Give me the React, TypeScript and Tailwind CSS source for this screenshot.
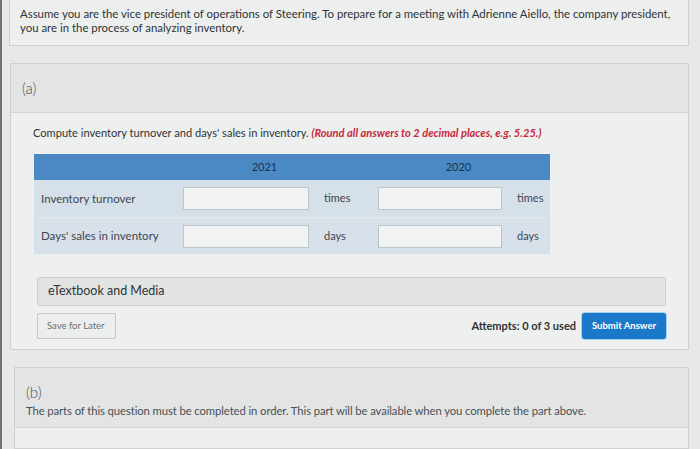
import React from 'react';

const font = { fontFamily: 'Lato, "Open Sans", sans-serif' };

const InputCell: React.FC<{ width: string; unit: string }> = ({ width, unit }) => (
  <div className="flex items-center">
    <div className={`${width} h-[23px] bg-[#f1f2f2] border border-[#bcc5cc]`} />
    <span className="ml-[15px] text-[11px] text-[#3d4650]">{unit}</span>
  </div>
);

export default function App() {
  return (
    <div
      className="w-[700px] h-[449px] bg-[#e7e9e8] flex overflow-hidden text-[#333]"
      style={font}
    >
      {/* dark monitor edge */}
      <div className="w-[2px] h-full bg-[#707372]" />

      <div className="flex-1 pl-[7px] pr-[11px] flex flex-col">
        {/* Intro */}
        <div className="h-[47px] -mt-[1px] border border-[#cfd1d0] bg-[#edefee] px-[10px] pt-[7px] text-[11.4px] leading-[14px] text-[#2f3336]">
          Assume you are the vice president of operations of Steering. To prepare for a meeting with Adrienne Aiello, the company president,
          <br />
          you are in the process of analyzing inventory.
        </div>

        {/* Part (a) */}
        <div className="mt-[17px] ml-[1px] border border-[#cfd1d0] bg-[#eef0ef]">
          <div className="h-[49px] bg-[#e3e5e4] border-b border-[#d2d4d3] pl-[11px] flex items-center text-[15px] font-light text-[#4a5058]">
            (a)
          </div>

          <div className="pl-[22px] pr-[21px] pt-[13px] pb-[10px]">
            <p className="text-[11.1px] leading-[14px] text-[#2f3336]">
              Compute inventory turnover and days' sales in inventory.{' '}
              <span className="font-bold italic text-[#c8283c]">
                (Round all answers to 2 decimal places, e.g. 5.25.)
              </span>
            </p>

            <div className="mt-[14px] w-[516px] ml-[1px]">
              <div className="h-[26px] bg-[#4a89c3] flex items-center text-[11px] text-[#1d3350]">
                <div className="w-[142px]" />
                <div className="w-[195px] text-center pr-[18px]">2021</div>
                <div className="w-[179px] text-center pr-[4px]">2020</div>
              </div>
              <div className="h-[37px] bg-[#d6e0e9] flex items-center">
                <div className="w-[142px] pl-[7px] text-[11.5px] text-[#3d4650]">Inventory turnover</div>
                <div className="w-[195px] pl-[7px]">
                  <InputCell width="w-[126px]" unit="times" />
                </div>
                <div className="w-[179px] pl-[7px]">
                  <InputCell width="w-[124px]" unit="times" />
                </div>
              </div>
              <div className="h-[37px] bg-[#d8e1ea] border-t border-[#e3e9ee] flex items-center">
                <div className="w-[142px] pl-[7px] text-[11.5px] text-[#3d4650]">Days' sales in inventory</div>
                <div className="w-[195px] pl-[7px]">
                  <InputCell width="w-[126px]" unit="days" />
                </div>
                <div className="w-[179px] pl-[7px]">
                  <InputCell width="w-[124px]" unit="days" />
                </div>
              </div>
            </div>

            <div className="mt-[23px] ml-[4px] w-[629px] h-[29px] bg-[#e2e4e3] border border-[#d0d2d1] rounded-[2px] flex items-center pl-[10px] text-[12.5px] text-[#2f3336]">
              eTextbook and Media
            </div>

            <div className="mt-[7px] ml-[4px] w-[629px] flex items-center">
              <div className="w-[79px] h-[26px] border border-[#c6c8c7] bg-[#eceeed] rounded-[2px] flex items-center pl-[9px] text-[9.5px] text-[#6a6e72]">
                Save for Later
              </div>
              <div className="flex-1" />
              <span className="text-[11px] font-bold text-[#2f3336] mr-[6px]">Attempts: 0 of 3 used</span>
              <div className="w-[84px] h-[26px] bg-[#1b79c9] rounded-[3px] ring-1 ring-[#9fd0f0] flex items-center justify-center text-[9.5px] font-bold text-white">
                Submit Answer
              </div>
            </div>
          </div>
        </div>

        {/* Part (b) */}
        <div className="mt-[17px] ml-[5px] border border-[#cfd1d0] bg-[#eef0ef] flex-1">
          <div className="h-[60px] bg-[#e3e5e4] border-b border-[#d2d4d3] pl-[11px] pt-[15px]">
            <div className="text-[15px] font-light leading-[18px] text-[#4a5058]">(b)</div>
            <div className="mt-[3px] text-[11.3px] leading-[14px] tracking-[-0.1px] text-[#4a4f54]">
              The parts of this question must be completed in order. This part will be available when you complete the part above.
            </div>
          </div>
        </div>
      </div>
    </div>
  );
}
